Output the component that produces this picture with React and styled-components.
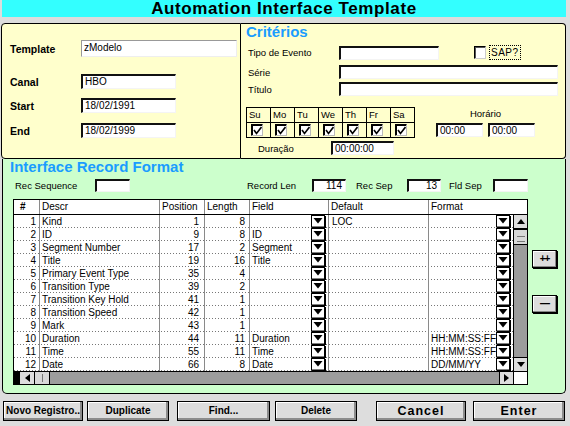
import React from "react";
import styled, { createGlobalStyle } from "styled-components";

const GlobalStyle = createGlobalStyle`
  html, body { margin: 0; padding: 0; background: #dddddd; }
  body { font-family: "Liberation Sans", Arial, sans-serif; color: #000; }
  * { box-sizing: border-box; }
`;

const rows = [
  { n: 1, descr: "Kind", pos: 1, len: 8, field: "", def: "LOC", fmt: "" },
  { n: 2, descr: "ID", pos: 9, len: 8, field: "ID", def: "", fmt: "" },
  { n: 3, descr: "Segment Number", pos: 17, len: 2, field: "Segment", def: "", fmt: "" },
  { n: 4, descr: "Title", pos: 19, len: 16, field: "Title", def: "", fmt: "" },
  { n: 5, descr: "Primary Event Type", pos: 35, len: 4, field: "", def: "", fmt: "" },
  { n: 6, descr: "Transition Type", pos: 39, len: 2, field: "", def: "", fmt: "" },
  { n: 7, descr: "Transition Key Hold", pos: 41, len: 1, field: "", def: "", fmt: "" },
  { n: 8, descr: "Transition Speed", pos: 42, len: 1, field: "", def: "", fmt: "" },
  { n: 9, descr: "Mark", pos: 43, len: 1, field: "", def: "", fmt: "" },
  { n: 10, descr: "Duration", pos: 44, len: 11, field: "Duration", def: "", fmt: "HH:MM:SS:FF" },
  { n: 11, descr: "Time", pos: 55, len: 11, field: "Time", def: "", fmt: "HH:MM:SS:FF" },
  { n: 12, descr: "Date", pos: 66, len: 8, field: "Date", def: "", fmt: "DD/MM/YY" },
];

const days = ["Su", "Mo", "Tu", "We", "Th", "Fr", "Sa"];

// ---------- page frame ----------
const Screen = styled.div`
  width: 570px;
  height: 426px;
  background: #dddddd;
  overflow: hidden;
  display: flex;
  flex-direction: column;
`;

const TitleBar = styled.div`
  margin: 0 4px 0 2px;
  height: 17px;
  background: #33ffff;
  text-align: center;
  font: bold 17px/17px "Liberation Sans", Arial, sans-serif;
  letter-spacing: 0.6px;
`;

const TopRow = styled.div`
  margin: 6px 4px 0 1px;
  height: 136px;
  display: flex;
`;

const YellowPanel = styled.div`
  background: #ffffcc;
  border: 1px solid #000;
  border-radius: ${(p) => p.$radius};
  ${(p) => (p.$w ? `width: ${p.$w}px;` : "flex: 1;")}
  ${(p) => (p.$noLeft ? "border-left: none;" : "")}
`;

const GreenPanel = styled.div`
  margin: 0 4px 0 2px;
  height: 235px;
  background: #ccffcc;
  border: 1px solid #000;
  border-top: none;
  border-radius: 0 0 5px 5px;
`;

const Heading = styled.div`
  font: bold 15px/15px "Liberation Sans", Arial, sans-serif;
  color: #1a9cff;
  padding-left: ${(p) => p.$pl}px;
`;

// ---------- form bits ----------
const FormRow = styled.div`
  display: flex;
  align-items: center;
  margin-top: ${(p) => p.$mt || 0}px;
  padding-left: ${(p) => p.$pl || 0}px;
`;

const BoldLabel = styled.span`
  width: 71px;
  font: bold 10.5px "Liberation Sans", Arial, sans-serif;
`;

const Label = styled.span`
  width: ${(p) => p.$w}px;
  margin-left: ${(p) => p.$ml || 0}px;
  font-size: 9.5px;
  flex-shrink: 0;
`;

const Input = styled.div`
  width: ${(p) => p.$w}px;
  height: ${(p) => p.$h || 14}px;
  flex-shrink: 0;
  background: #fff;
  border-style: solid;
  border-width: ${(p) => (p.$soft ? "1px" : "2px 1px 1px 2px")};
  border-color: ${(p) => (p.$soft ? "#999 #eee #eee #999" : "#111 #f4f4f4 #f4f4f4 #111")};
  font-size: 10px;
  line-height: ${(p) => (p.$h || 14) - 3}px;
  padding: 0 ${(p) => (p.$right ? "3px" : "1px")} 0 2px;
  text-align: ${(p) => (p.$right ? "right" : "left")};
  white-space: nowrap;
`;

const SapBox = styled.div`
  width: 12px;
  height: 13px;
  margin-left: 35px;
  background: #fff;
  border: 1px solid;
  border-color: #000 #ccc #ccc #000;
  box-shadow: inset 1px 1px 0 #555;
`;

const SapLabel = styled.span`
  margin-left: 3px;
  padding: 1px 1px;
  border: 1px dotted #000;
  font-size: 10px;
  letter-spacing: 0.5px;
`;

// ---------- days ----------
const DaysSection = styled.div`
  display: flex;
  margin-top: 11px;
  padding-left: 5px;
`;

const DaysGrid = styled.div`
  display: grid;
  grid-template-columns: repeat(7, 24px);
  grid-auto-rows: 15px;
  border-left: 1px solid #000;
  border-top: 1px solid #000;
`;

const DayCell = styled.div`
  border-right: 1px solid #000;
  border-bottom: 1px solid #000;
  font-size: 9.5px;
  line-height: 13px;
  display: flex;
  align-items: ${(p) => (p.$check ? "center" : "flex-start")};
  padding-left: ${(p) => (p.$check ? 4 : 2)}px;
`;

const CheckBox = styled.div`
  width: 12px;
  height: 12px;
  background: #fff;
  border: 1px solid;
  border-color: #000 #bbb #bbb #000;
  box-shadow: inset 1px 1px 0 #000;
  display: flex;
  align-items: center;
  justify-content: center;
`;

const TimeBox = styled.div`
  margin-left: 21px;
  display: flex;
  flex-direction: column;
  align-items: center;
`;

const TimeLabel = styled.span`
  font-size: 9.5px;
  margin-top: 1px;
`;

const TimeInputs = styled.div`
  display: flex;
  gap: 5px;
  margin-top: 4px;
`;

// ---------- table ----------
const TableArea = styled.div`
  display: flex;
  margin-top: 7px;
  padding-left: 10px;
`;

const TableFrame = styled.div`
  width: 515px;
  height: 186px;
  border: 1px solid #000;
  background: #fff;
  display: flex;
  flex-direction: column;
`;

const cols = "26px 120px 45px 45px 79px 100px 84px";

const HeaderRow = styled.div`
  display: grid;
  grid-template-columns: 26px 120px 45px 45px 79px 100px 98px;
  height: 15px;
  border-bottom: 1px solid #000;
`;

const HeadCell = styled.div`
  font-size: 10px;
  line-height: 14px;
  padding-left: ${(p) => (p.$hash ? 6 : 2)}px;
  font-weight: ${(p) => (p.$hash ? "bold" : "normal")};
  border-right: ${(p) => (p.$last ? "none" : "1px solid #8a8a8a")};
`;

const BodyArea = styled.div`
  display: flex;
  height: 156px;
`;

const RowsBox = styled.div`
  width: 499px;
`;

const Row = styled.div`
  display: grid;
  grid-template-columns: ${cols};
  height: 13px;
  background: repeating-linear-gradient(to right, #777 0 1px, transparent 1px 3px) bottom / 100% 1px no-repeat;
`;

const Cell = styled.div`
  font-size: 10px;
  line-height: 13px;
  white-space: nowrap;
  overflow: hidden;
  border-right: 1px solid #8a8a8a;
  text-align: ${(p) => p.$align || "left"};
  padding: 0 ${(p) => p.$pr || 0}px 0 ${(p) => p.$pl || 2}px;
`;

const PickCell = styled(Cell)`
  display: flex;
  justify-content: space-between;
  align-items: flex-start;
  padding-right: 2px;
  border-right: ${(p) => (p.$last ? "none" : "1px solid #8a8a8a")};
`;

const VScroll = styled.div`
  width: 14px;
  display: flex;
  flex-direction: column;
  border-left: 1px solid #000;
  background: #9c9c9c;
`;

const ArrowBox = styled.div`
  width: ${(p) => (p.$h ? "14px" : "13px")};
  height: ${(p) => (p.$h ? "12px" : "14px")};
  background: #dddddd;
  display: flex;
  align-items: center;
  justify-content: center;
  flex-shrink: 0;
  ${(p) => p.$edge}
`;

const Thumb = styled.div`
  flex-shrink: 0;
  background: #d8d8d8;
  width: ${(p) => (p.$h ? "16px" : "13px")};
  height: ${(p) => (p.$h ? "12px" : "16px")};
  border: 1px solid #000;
  border-width: ${(p) => (p.$h ? "0 1px" : "1px 0")};
  background-image: ${(p) =>
    p.$h
      ? "repeating-linear-gradient(to right, transparent 0 4px, #777 4px 5px, transparent 5px 6px)"
      : "repeating-linear-gradient(to bottom, transparent 0 3px, #777 3px 4px, transparent 4px 5px)"};
  background-size: ${(p) => (p.$h ? "8px 8px" : "8px 9px")};
  background-position: center;
  background-repeat: no-repeat;
`;

const Track = styled.div`
  flex: 1;
  background: #9c9c9c;
`;

const HScrollRow = styled.div`
  display: flex;
  height: 13px;
  border-top: 1px solid #000;
`;

const HScroll = styled.div`
  width: 499px;
  display: flex;
  background: #9c9c9c;
`;

const BlackStub = styled.div`
  width: 6px;
  background: #000;
`;

const Corner = styled.div`
  flex: 1;
  background: #fff;
  border-left: 1px solid #000;
`;

const SideButtons = styled.div`
  display: flex;
  flex-direction: column;
  margin-left: 4px;
`;

const SideButton = styled.div`
  width: 25px;
  height: 18px;
  margin-top: ${(p) => p.$mt}px;
  background: #dddddd;
  border: 1px solid #000;
  box-shadow: 1px 1px 0 #000, inset -1px -1px 0 #888, inset 1px 1px 0 #fff;
  font: bold 10px/16px "Liberation Sans", Arial, sans-serif;
  text-align: center;
  letter-spacing: -1px;
`;

// ---------- bottom buttons ----------
const ButtonRow = styled.div`
  display: flex;
  margin-top: 7px;
  padding-left: 3px;
`;

const Button = styled.div`
  width: ${(p) => p.$w}px;
  height: 20px;
  margin-left: ${(p) => p.$ml || 0}px;
  background: #dddddd;
  border: 1px solid #000;
  box-shadow: inset -2px -2px 0 #8c8c8c, inset 1px 1px 0 #fff;
  text-align: center;
  font: bold ${(p) => (p.$big ? "12.5px/18px" : "10px/18px")} "Liberation Sans", Arial, sans-serif;
  letter-spacing: ${(p) => (p.$big ? "1px" : "0")};
  white-space: nowrap;
`;

// ---------- icons ----------
const Dropdown = () => (
  <svg width="15" height="13" viewBox="0 0 15 13" style={{ flexShrink: 0 }}>
    <rect x="0.5" y="0.5" width="13" height="11.5" fill="#fff" stroke="#000" />
    <line x1="14.5" y1="1" x2="14.5" y2="13" stroke="#000" />
    <line x1="1" y1="12.5" x2="15" y2="12.5" stroke="#000" />
    <polygon points="2.5,3 11.5,3 7,8.5" fill="#000" />
  </svg>
);

const Tri = ({ dir }) => {
  const pts = {
    up: "1,6 9,6 5,1",
    down: "1,1 9,1 5,6",
    left: "6,1 6,9 1,5",
    right: "1,1 1,9 6,5",
  }[dir];
  const w = dir === "up" || dir === "down" ? 10 : 7;
  const h = dir === "up" || dir === "down" ? 7 : 10;
  return (
    <svg width={w} height={h} viewBox={`0 0 ${w} ${h}`}>
      <polygon points={pts} fill="#000" />
    </svg>
  );
};

const Check = () => (
  <svg width="9" height="9" viewBox="0 0 9 9">
    <path d="M1 4 L3.5 7.5 L8.5 1" fill="none" stroke="#000" strokeWidth="1.6" />
  </svg>
);

export default function App() {
  return (
    <>
      <GlobalStyle />
      <Screen>
        <TitleBar>Automation Interface Template</TitleBar>

        <TopRow>
          <YellowPanel $w={240} $radius="4px 0 0 4px">
            <FormRow $mt={16} $pl={8}>
              <BoldLabel>Template</BoldLabel>
              <Input $w={156} $h={17} $soft>
                zModelo
              </Input>
            </FormRow>
            <FormRow $mt={17} $pl={8}>
              <BoldLabel>Canal</BoldLabel>
              <Input $w={95} $h={15}>HBO</Input>
            </FormRow>
            <FormRow $mt={9} $pl={8}>
              <BoldLabel>Start</BoldLabel>
              <Input $w={95} $h={15}>18/02/1991</Input>
            </FormRow>
            <FormRow $mt={10} $pl={8}>
              <BoldLabel>End</BoldLabel>
              <Input $w={95} $h={15}>18/02/1999</Input>
            </FormRow>
          </YellowPanel>

          <YellowPanel $noLeft $radius="0 4px 4px 0">
            <Heading $pl={5}>Critérios</Heading>
            <FormRow $mt={6} $pl={7}>
              <Label $w={91}>Tipo de Evento</Label>
              <Input $w={100} />
              <SapBox />
              <SapLabel>SAP?</SapLabel>
            </FormRow>
            <FormRow $mt={5} $pl={7}>
              <Label $w={91}>Série</Label>
              <Input $w={219} />
            </FormRow>
            <FormRow $mt={3} $pl={7}>
              <Label $w={91}>Título</Label>
              <Input $w={219} />
            </FormRow>

            <DaysSection>
              <DaysGrid>
                {days.map((d) => (
                  <DayCell key={d}>{d}</DayCell>
                ))}
                {days.map((d) => (
                  <DayCell key={d + "c"} $check>
                    <CheckBox>
                      <Check />
                    </CheckBox>
                  </DayCell>
                ))}
              </DaysGrid>
              <TimeBox>
                <TimeLabel>Horário</TimeLabel>
                <TimeInputs>
                  <Input $w={47}>00:00</Input>
                  <Input $w={47}>00:00</Input>
                </TimeInputs>
              </TimeBox>
            </DaysSection>

            <FormRow $mt={3} $pl={17}>
              <Label $w={73}>Duração</Label>
              <Input $w={63}>00:00:00</Input>
            </FormRow>
          </YellowPanel>
        </TopRow>

        <GreenPanel>
          <Heading $pl={7}>Interface Record Format</Heading>
          <FormRow $mt={5} $pl={12}>
            <Label $w={80}>Rec Sequence</Label>
            <Input $w={35} $h={13} />
            <Label $w={65} $ml={117}>Record Len</Label>
            <Input $w={34} $h={13} $right>114</Input>
            <Label $w={51} $ml={10}>Rec Sep</Label>
            <Input $w={34} $h={13} $right>13</Input>
            <Label $w={44} $ml={8}>Fld Sep</Label>
            <Input $w={35} $h={13} />
          </FormRow>

          <TableArea>
            <TableFrame>
              <HeaderRow>
                <HeadCell $hash>#</HeadCell>
                <HeadCell>Descr</HeadCell>
                <HeadCell>Position</HeadCell>
                <HeadCell>Length</HeadCell>
                <HeadCell>Field</HeadCell>
                <HeadCell>Default</HeadCell>
                <HeadCell $last>Format</HeadCell>
              </HeaderRow>
              <BodyArea>
                <RowsBox>
                  {rows.map((r) => (
                    <Row key={r.n}>
                      <Cell $align="right" $pr={3}>{r.n}</Cell>
                      <Cell>{r.descr}</Cell>
                      <Cell $align="right" $pr={5}>{r.pos}</Cell>
                      <Cell $align="right" $pr={4}>{r.len}</Cell>
                      <PickCell>
                        <span>{r.field}</span>
                        <Dropdown />
                      </PickCell>
                      <Cell $pl={3}>{r.def}</Cell>
                      <PickCell $last>
                        <span>{r.fmt}</span>
                        <Dropdown />
                      </PickCell>
                    </Row>
                  ))}
                </RowsBox>
                <VScroll>
                  <ArrowBox $edge="border-bottom: 1px solid #000;">
                    <Tri dir="up" />
                  </ArrowBox>
                  <Thumb />
                  <Track />
                  <ArrowBox $edge="border-top: 1px solid #000;">
                    <Tri dir="down" />
                  </ArrowBox>
                </VScroll>
              </BodyArea>
              <HScrollRow>
                <HScroll>
                  <BlackStub />
                  <ArrowBox $h>
                    <Tri dir="left" />
                  </ArrowBox>
                  <Thumb $h />
                  <Track />
                  <ArrowBox $h $edge="border-left: 1px solid #000;">
                    <Tri dir="right" />
                  </ArrowBox>
                </HScroll>
                <Corner />
              </HScrollRow>
            </TableFrame>
            <SideButtons>
              <SideButton $mt={51}>++</SideButton>
              <SideButton $mt={27}>—</SideButton>
            </SideButtons>
          </TableArea>
        </GreenPanel>

        <ButtonRow>
          <Button $w={80}>Novo Registro..</Button>
          <Button $w={82} $ml={4}>Duplicate</Button>
          <Button $w={93} $ml={8}>Find...</Button>
          <Button $w={82} $ml={5}>Delete</Button>
          <Button $w={90} $ml={19} $big>Cancel</Button>
          <Button $w={92} $ml={7} $big>Enter</Button>
        </ButtonRow>
      </Screen>
    </>
  );
}
